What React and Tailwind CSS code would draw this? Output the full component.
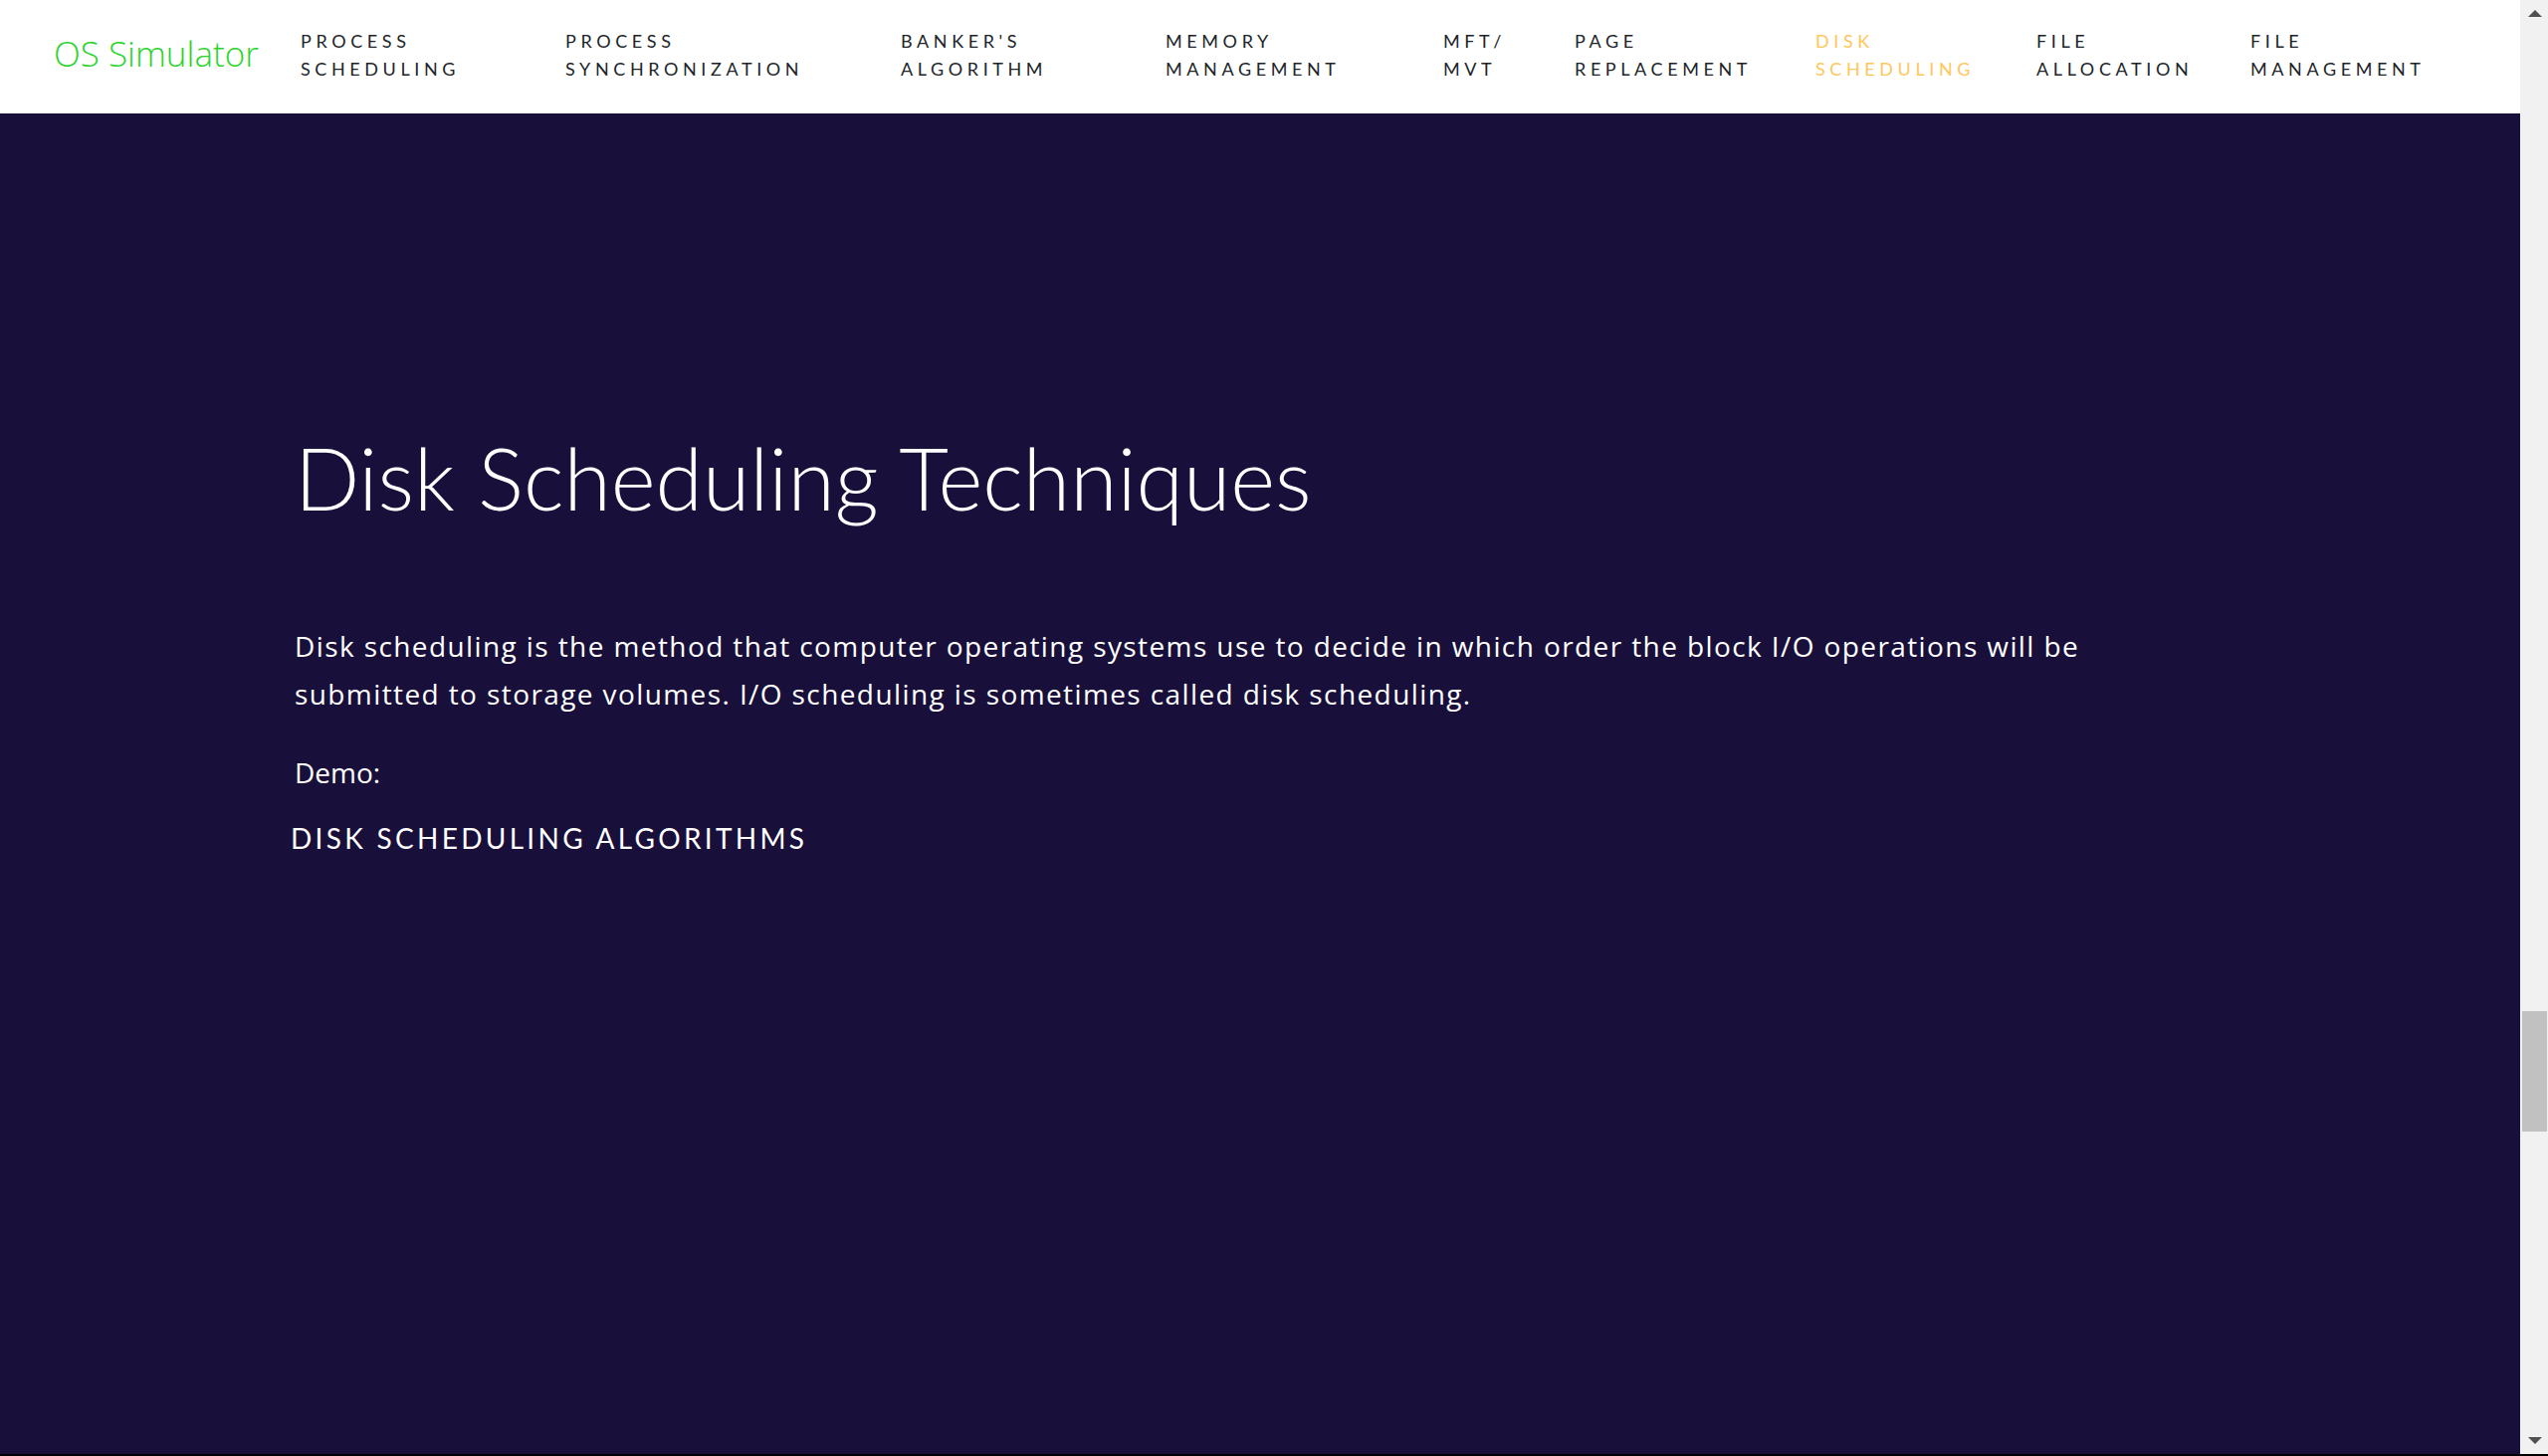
export default function App() {
  const nav = [
    ["PROCESS", "SCHEDULING", "w-[266px]", false],
    ["PROCESS", "SYNCHRONIZATION", "w-[337px]", false],
    ["BANKER'S", "ALGORITHM", "w-[266px]", false],
    ["MEMORY", "MANAGEMENT", "w-[279px]", false],
    ["MFT/", "MVT", "w-[132px]", false],
    ["PAGE", "REPLACEMENT", "w-[242px]", false],
    ["DISK", "SCHEDULING", "w-[222px]", true],
    ["FILE", "ALLOCATION", "w-[215px]", false],
    ["FILE", "MANAGEMENT", "w-[240px]", false],
  ];
  return (
    <div className="w-[2560px] h-[1463px] bg-black flex flex-col overflow-hidden">
      <div className="flex h-[1461px]">
        <div className="flex-1 flex flex-col">
          <nav className="h-[114px] bg-white flex items-start pl-[54px]">
            <div
              className="w-[248px] pt-[36px] text-[35px] leading-none font-light text-[#2bd42b]"
              style={{ fontFamily: '"Open Sans", sans-serif' }}
            >
              OS Simulator
            </div>
            {nav.map(([a, b, w, active], i) => (
              <div
                key={i}
                className={`${w} pt-[27px] flex flex-col text-[18px] leading-[28px] tracking-[4.6px] ${
                  active ? "text-[#fec75c]" : "text-[#212529]"
                }`}
                style={{ fontFamily: "Lato, sans-serif" }}
              >
                <span>{a}</span>
                <span>{b}</span>
              </div>
            ))}
          </nav>
          <main className="flex-1 bg-[#18103a] text-white pl-[296px] pt-[323px]">
            <h1
              className="text-[86px] leading-none font-light"
              style={{ fontFamily: "Lato, sans-serif" }}
            >
              Disk Scheduling Techniques
            </h1>
            <p
              className="mt-[102px] max-w-[1850px] text-[28px] leading-[48px] tracking-[1.4px]"
              style={{ fontFamily: '"Open Sans", sans-serif' }}
            >
              Disk scheduling is the method that computer operating systems use to decide in which
              order the block I/O operations will be submitted to storage volumes. I/O scheduling is
              sometimes called disk scheduling.
            </p>
            <p
              className="mt-[31px] text-[28px] leading-[48px]"
              style={{ fontFamily: '"Open Sans", sans-serif' }}
            >
              Demo:
            </p>
            <div
              className="mt-[28px] -ml-[4px] text-[28px] leading-none tracking-[3.3px]"
              style={{ fontFamily: "Lato, sans-serif" }}
            >
              DISK SCHEDULING ALGORITHMS
            </div>
          </main>
        </div>
        <div className="w-[28px] bg-[#f1f1f1] flex flex-col">
          <div className="h-[28px] flex justify-center pt-[10px] pl-[2px]">
            <svg width="14" height="7" viewBox="0 0 14 7">
              <polygon points="0,7 7,0 14,7" fill="#505050" />
            </svg>
          </div>
          <div className="flex-1 flex flex-col pl-[2px] pr-[1px]">
            <div className="mt-[988px] h-[121px] bg-[#c1c1c1]" />
          </div>
          <div className="h-[28px] flex justify-center pt-[11px] pl-[2px]">
            <svg width="14" height="7" viewBox="0 0 14 7">
              <polygon points="0,0 14,0 7,7" fill="#505050" />
            </svg>
          </div>
        </div>
      </div>
    </div>
  );
}
